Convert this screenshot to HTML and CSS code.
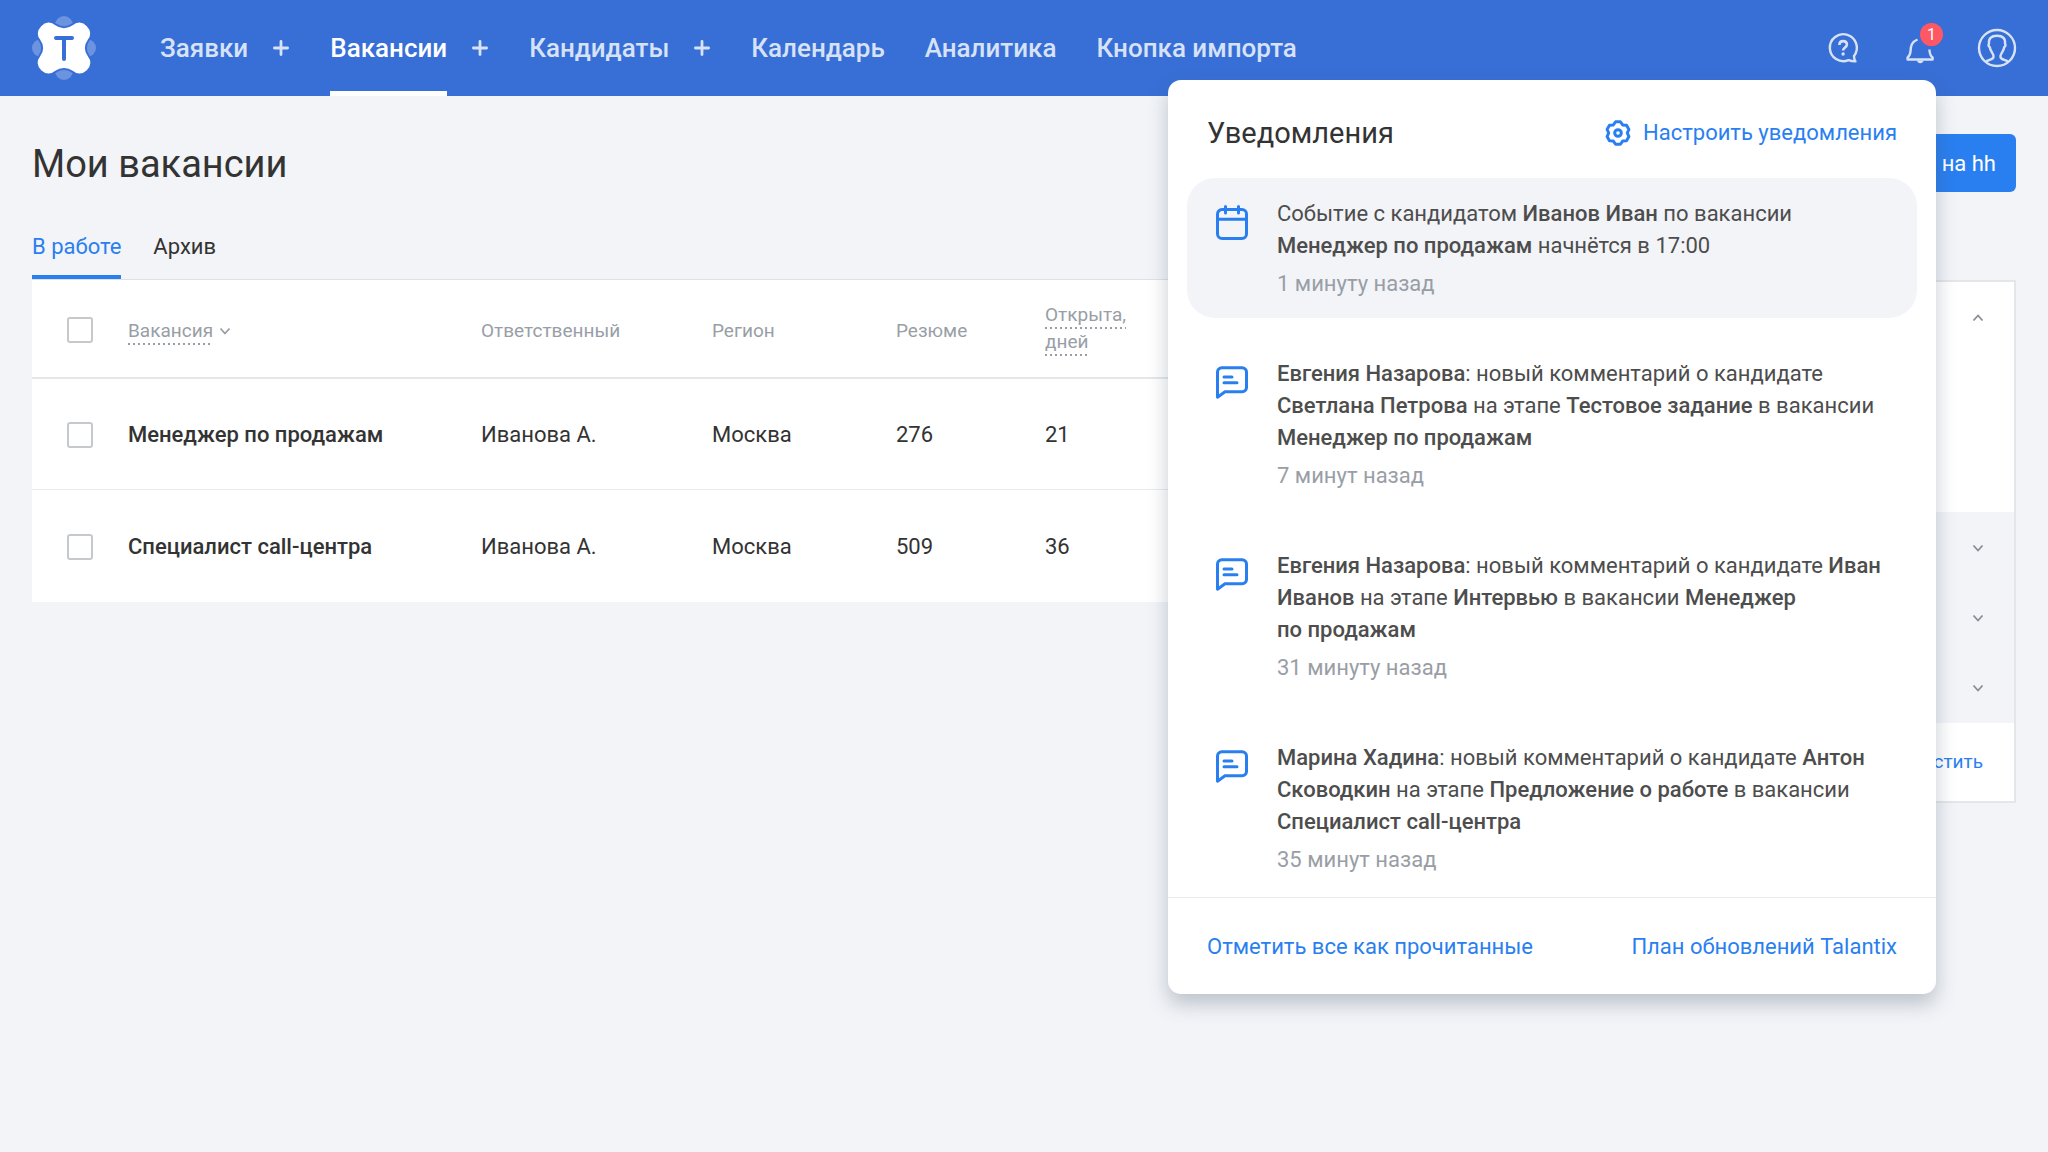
FILE: index.html
```html
<!DOCTYPE html>
<html lang="ru">
<head>
<meta charset="utf-8">
<meta name="viewport" content="width=device-width, initial-scale=1">
<title>Мои вакансии — Talantix</title>
<link rel="stylesheet" href="styles.css">
</head>
<body>
<svg class="sprite" aria-hidden="true">
  <symbol id="plus" viewBox="0 0 16 16"><path d="M8 1.400v13.200M1.400 8h13.200" fill="none" stroke="currentColor" stroke-width="2.800" stroke-linecap="round"/></symbol>
  <symbol id="chevron" viewBox="0 0 12 12"><path d="M1.500 3.500 6 8.500l4.500-5" fill="none" stroke="currentColor" stroke-width="1.800"/></symbol>
  <symbol id="comment" viewBox="0 0 32 33"><path d="M1.500 31.200V6a4.300 4.300 0 0 1 4.300-4.300h20.400a4.300 4.300 0 0 1 4.300 4.300v15.500a4.300 4.300 0 0 1-4.300 4.300H9Z" fill="none" stroke="currentColor" stroke-width="3" stroke-linejoin="round"/><path d="M8 11h8M8 16.700h13" stroke="currentColor" stroke-width="3" stroke-linecap="round"/></symbol>
</svg>

<header class="header">
  <a class="logo" href="#" aria-label="Talantix">
    <svg viewBox="0 0 64 64" width="64" height="64">
      <g fill="#6b93e0"><circle cx="32" cy="9" r="9"/><circle cx="32" cy="55" r="9"/><circle cx="9" cy="32" r="9"/><circle cx="55" cy="32" r="9"/></g>
      <path d="M8.500 9.500C13 4.500 19.500 4.500 24 8.500c4.500 3.500 11.500 3.500 16 0 4.500-4 11-4 15.500 1 5 5 4.500 11 1 15-3.500 4.500-3.500 10.500 0 15 3.500 4.500 4 10.500-1 15.500-4.500 4.500-11 4.500-15.500.5-4.500-3.500-11.500-3.500-16 0-4.500 4-11 4-15.500-.5-5-5-4.500-11-1-15.500 3.500-4.500 3.500-10.500 0-15-3.500-4-4-10 1-15Z" fill="#fff" stroke="#386fd6" stroke-width="2"/>
      <path d="M24 22h16M32 22v21" fill="none" stroke="#386fd6" stroke-width="4" stroke-linecap="round"/>
    </svg>
  </a>
  <nav class="nav">
    <a class="nav-link" href="#">Заявки</a>
    <button class="add" aria-label="Добавить заявку"><svg width="16" height="16"><use href="#plus"/></svg></button>
    <a class="nav-link nav-link-active" href="#">Вакансии</a>
    <button class="add" aria-label="Добавить вакансию"><svg width="16" height="16"><use href="#plus"/></svg></button>
    <a class="nav-link" href="#">Кандидаты</a>
    <button class="add" aria-label="Добавить кандидата"><svg width="16" height="16"><use href="#plus"/></svg></button>
    <a class="nav-link" href="#">Календарь</a>
    <a class="nav-link" href="#">Аналитика</a>
    <a class="nav-link" href="#">Кнопка импорта</a>
  </nav>
  <div class="tools">
    <button class="tool" aria-label="Помощь">
      <svg viewBox="0 0 40 40" width="40" height="40" fill="none" stroke="currentColor" stroke-width="2.400">
        <path d="M31 28a13.500 13.500 0 1 0-5.500 4.200c2 .8 4.500 1.300 7 1.200-1.200-1.500-1.500-3.500-1.500-5.400Z" stroke-linejoin="round"/>
        <path d="M16.400 17c0-2.300 1.400-3.900 3.700-3.900s3.800 1.400 3.800 3.500c0 2.900-3.800 3-3.800 5.900" stroke-width="2.600"/>
        <circle cx="20.100" cy="26" r="1.700" fill="currentColor" stroke="none"/>
      </svg>
    </button>
    <button class="tool" aria-label="Уведомления">
      <svg viewBox="0 0 40 40" width="40" height="40" fill="none" stroke="currentColor" stroke-width="2.400">
        <path d="M17.500 11.500C11.500 14 10.800 18 10.600 22.500c-.2 4-1 5.500-3 7v2h25v-2c-2-1.500-3-3.500-3.200-8" stroke-linejoin="round"/>
        <path d="M17 32.500h6.500a3.300 3.300 0 0 1-6.500 0Z" fill="currentColor" stroke="none"/>
      </svg>
      <span class="badge">1</span>
    </button>
    <button class="tool" aria-label="Профиль">
      <svg viewBox="0 0 40 40" width="40" height="40" fill="none" stroke="currentColor" stroke-width="2.400">
        <circle cx="20" cy="20" r="18"/>
        <path d="M8.500 34c3-2.500 7.500-2 8-5 .3-2-.5-3-1.500-4.500-1.500-2.200-2-3.500-2.300-5.500-1.300-.6-1.500-2.300-.7-3.300-.6-5 2-8 8-8s8.600 3 8 8c.8 1 .6 2.700-.7 3.300-.3 2-.8 3.300-2.300 5.500-1 1.500-1.800 2.500-1.500 4.500.5 3 5 2.500 8 5" stroke-linejoin="round"/>
      </svg>
    </button>
  </div>

  <section class="popup" aria-labelledby="popup-title">
    <div class="popup-head">
      <h2 class="popup-title" id="popup-title">Уведомления</h2>
      <a class="link settings" href="#">
        <svg viewBox="0 0 26 26" width="26" height="26" fill="none" stroke="currentColor" stroke-width="3">
          <path d="M15.400 1.750 17.650 4.950 21.550 5.300 23.900 9.450 22.300 13l1.600 3.550-2.350 4.150-3.900.35-2.250 3.200H10.600L8.350 21.050 4.450 20.700 2.100 16.550 3.700 13 2.100 9.450 4.450 5.300 8.350 4.950 10.600 1.750Z" stroke-linejoin="round"/>
          <circle cx="13" cy="13" r="3.300"/>
        </svg>
        Настроить уведомления
      </a>
    </div>
    <ul class="notes">
      <li class="note note-new">
        <svg class="note-icon" viewBox="0 0 32 36" width="32" height="36" fill="none" stroke="currentColor" stroke-width="3">
          <rect x="1.500" y="4.500" width="29" height="29" rx="4.500"/><path d="M2 14.200h28M9.500 1.500v6.500M22.500 1.500v6.500" stroke-linecap="round"/>
        </svg>
        <div>
          <p class="note-text">Событие с кандидатом <b>Иванов Иван</b> по вакансии <b>Менеджер по продажам</b> начнётся в 17:00</p>
          <time class="note-time">1 минуту назад</time>
        </div>
      </li>
      <li class="note">
        <svg class="note-icon" width="32" height="33"><use href="#comment"/></svg>
        <div>
          <p class="note-text"><b>Евгения Назарова</b>: новый комментарий о кандидате <b>Светлана Петрова</b> на этапе <b>Тестовое задание</b> в вакансии <b>Менеджер по продажам</b></p>
          <time class="note-time">7 минут назад</time>
        </div>
      </li>
      <li class="note">
        <svg class="note-icon" width="32" height="33"><use href="#comment"/></svg>
        <div>
          <p class="note-text"><b>Евгения Назарова</b>: новый комментарий о кандидате <b>Иван Иванов</b> на этапе <b>Интервью</b> в вакансии <b>Менеджер по&nbsp;продажам</b></p>
          <time class="note-time">31 минуту назад</time>
        </div>
      </li>
      <li class="note">
        <svg class="note-icon" width="32" height="33"><use href="#comment"/></svg>
        <div>
          <p class="note-text"><b>Марина Хадина</b>: новый комментарий о кандидате <b>Антон Сководкин</b> на этапе <b>Предложение о работе</b> в вакансии <b>Специалист call-центра</b></p>
          <time class="note-time">35 минут назад</time>
        </div>
      </li>
    </ul>
    <div class="popup-foot">
      <button class="link">Отметить все как прочитанные</button>
      <a class="link" href="#">План обновлений Talantix</a>
    </div>
  </section>
</header>

<main class="page">
  <div class="page-head">
    <h1 class="title">Мои вакансии</h1>
    <button class="primary">на hh</button>
  </div>
  <div class="columns">
    <div class="list">
      <nav class="tabs">
        <a class="tab tab-active" href="#">В работе</a>
        <a class="tab" href="#">Архив</a>
      </nav>
      <table class="table">
        <colgroup><col class="c-check"><col class="c-name"><col class="c-owner"><col class="c-region"><col class="c-count"><col class="c-days"></colgroup>
        <thead>
          <tr>
            <th><input class="check" type="checkbox" aria-label="Выбрать все"></th>
            <th><button class="sort"><span class="dotted">Вакансия</span><svg class="sort-icon" width="12" height="12"><use href="#chevron"/></svg></button></th>
            <th>Ответственный</th>
            <th>Регион</th>
            <th>Резюме</th>
            <th class="two-line"><button class="sort"><span class="dotted">Открыта,<br>дней</span></button></th>
          </tr>
        </thead>
        <tbody>
          <tr>
            <td><input class="check" type="checkbox" aria-label="Менеджер по продажам"></td>
            <td><a class="vacancy" href="#">Менеджер по продажам</a></td>
            <td>Иванова А.</td><td>Москва</td><td>276</td><td>21</td>
          </tr>
          <tr>
            <td><input class="check" type="checkbox" aria-label="Специалист call-центра"></td>
            <td><a class="vacancy" href="#">Специалист call-центра</a></td>
            <td>Иванова А.</td><td>Москва</td><td>509</td><td>36</td>
          </tr>
        </tbody>
      </table>
    </div>
    <aside class="side">
      <div class="side-open">
        <button class="fold fold-open" aria-label="Свернуть"><svg width="12" height="12"><use href="#chevron"/></svg></button>
      </div>
      <div class="side-closed">
        <button class="fold" aria-label="Развернуть"><svg width="12" height="12"><use href="#chevron"/></svg></button>
        <button class="fold" aria-label="Развернуть"><svg width="12" height="12"><use href="#chevron"/></svg></button>
        <button class="fold" aria-label="Развернуть"><svg width="12" height="12"><use href="#chevron"/></svg></button>
      </div>
      <div class="side-foot"><button class="side-link">Пропустить</button></div>
    </aside>
  </div>
</main>
</body>
</html>
```

FILE: styles.css
```css
* { box-sizing: border-box; }

body {
  margin: 0;
  min-height: 100vh;
  background: #f2f4f8;
  color: #333;
  font: 22px/32px Roboto, "Liberation Sans", sans-serif;
}

button {
  padding: 0;
  border: 0;
  background: none;
  color: inherit;
  font: inherit;
  cursor: pointer;
}

a { color: inherit; text-decoration: none; }
svg { display: block; flex: none; }
.sprite { position: absolute; width: 0; height: 0; }

/* Header */
.header {
  position: relative;
  z-index: 1;
  display: flex;
  align-items: center;
  height: 96px;
  padding: 0 31px 0 32px;
  background: #386fd6;
  color: #d7e2f7;
}

.nav {
  display: flex;
  align-items: stretch;
  gap: 40px;
  height: 96px;
  margin-left: 64px;
}

.nav-link {
  display: flex;
  align-items: center;
  border: solid transparent;
  border-width: 5px 0;
  font-size: 26px;
  font-weight: 500;
}

.nav-link-active { border-bottom-color: #fff; color: #fff; }
.add { margin: 0 1px 0 -15px; }

.tools { display: flex; gap: 37px; margin-left: auto; }
.tool { position: relative; }

.badge {
  position: absolute;
  top: -5px;
  right: -3px;
  width: 23px;
  height: 23px;
  border-radius: 50%;
  background: #ff5864;
  color: #fff;
  font-size: 16px;
  line-height: 23px;
}

/* Notifications */
.popup {
  position: absolute;
  top: 80px;
  right: 112px;
  width: 768px;
  border-radius: 13px;
  background: #fff;
  box-shadow: 0 10px 20px rgba(65, 80, 100, .3);
  color: #4d4d4d;
}

.popup-head {
  display: flex;
  align-items: center;
  justify-content: space-between;
  height: 98px;
  padding: 8px 39px 0;
}

.popup-title { margin: 0; color: #333; font-size: 29px; font-weight: 400; }
.link { color: #2a7ff0; }
.settings { display: flex; align-items: center; gap: 12px; }

.notes {
  display: flex;
  flex-direction: column;
  gap: 20px;
  margin: 0;
  padding: 0 19px 3px;
  list-style: none;
}

.note {
  display: flex;
  gap: 29px;
  padding: 20px 20px 18px 29px;
  border-radius: 28px;
}

.note-new { background: #f2f4f8; }
.note-icon { margin-top: 8px; color: #2a7ff0; }
.note-new .note-icon { margin-top: 7px; }
.note-text { margin: 0 0 6px; }
.note-text b { font-weight: 500; }
.note-time { display: block; color: #999ea6; }

.popup-foot {
  display: flex;
  align-items: center;
  justify-content: space-between;
  height: 97px;
  padding: 1px 39px 0;
  border-top: 1px solid #e9ebee;
}

/* Page */
.page { padding: 38px 32px; }

.page-head {
  display: flex;
  align-items: center;
  justify-content: space-between;
}

.title { margin: 0; padding-top: 2px; font-size: 38px; font-weight: 400; line-height: 48px; }

.primary {
  width: 280px;
  height: 58px;
  padding: 2px 20px 0;
  border-radius: 6px;
  background: #2a7ff0;
  color: #fff;
  text-align: right;
}

.columns {
  display: grid;
  grid-template-columns: 1fr 440px;
  gap: 32px;
  align-items: start;
  margin-top: 36px;
}

.tabs { display: flex; gap: 32px; }
.tab { height: 51px; padding-top: 3px; border-bottom: 4px solid transparent; }
.tab-active { border-color: #2a7ff0; color: #2a7ff0; }

.table {
  width: 100%;
  border-collapse: collapse;
  border-top: 1px solid #dfe2e5;
  background: #fff;
  table-layout: fixed;
}

.c-check { width: 96px; }
.c-name { width: 353px; }
.c-owner { width: 231px; }
.c-region { width: 184px; }
.c-count { width: 149px; }

th, td { text-align: left; }

th {
  height: 98px;
  padding: 4px 0 0;
  color: #999ea6;
  font-size: 19px;
  font-weight: 400;
  line-height: 27px;
}

td { height: 112px; padding: 2px 0 0; border-top: 1px solid #e9ebee; }
thead tr { border-bottom: 2px solid #e4e7e9; }
.two-line { padding: 0; }

.check {
  display: block;
  appearance: none;
  width: 26px;
  height: 26px;
  margin: 0 0 0 35px;
  border: 2px solid #c6c9cc;
  border-radius: 3px;
  background: #fff;
}

.vacancy { font-weight: 500; }
.sort { display: block; text-align: left; }
.sort-icon { display: inline-block; margin-left: 6px; }

.dotted {
  padding-bottom: 3px;
  background: repeating-linear-gradient(90deg, #999ea6 0 2px, transparent 2px 5px) left bottom / 100% 2px no-repeat;
  -webkit-box-decoration-break: clone;
  box-decoration-break: clone;
}

/* Side panel */
.side { margin-top: 52px; border: 2px solid #e4e7e9; background: #fff; }
.side-open { height: 230px; padding-top: 1px; }
.side-closed { padding-top: 1px; background: #f2f4f8; }

.fold {
  display: flex;
  align-items: center;
  justify-content: flex-end;
  width: 100%;
  height: 70px;
  padding: 0 30px;
  color: #888d94;
}

.fold-open svg { transform: rotate(180deg); }

.side-foot {
  display: flex;
  align-items: center;
  justify-content: flex-end;
  height: 78px;
  padding: 0 31px;
}

.side-link { color: #2a7ff0; font-size: 19px; }
```
